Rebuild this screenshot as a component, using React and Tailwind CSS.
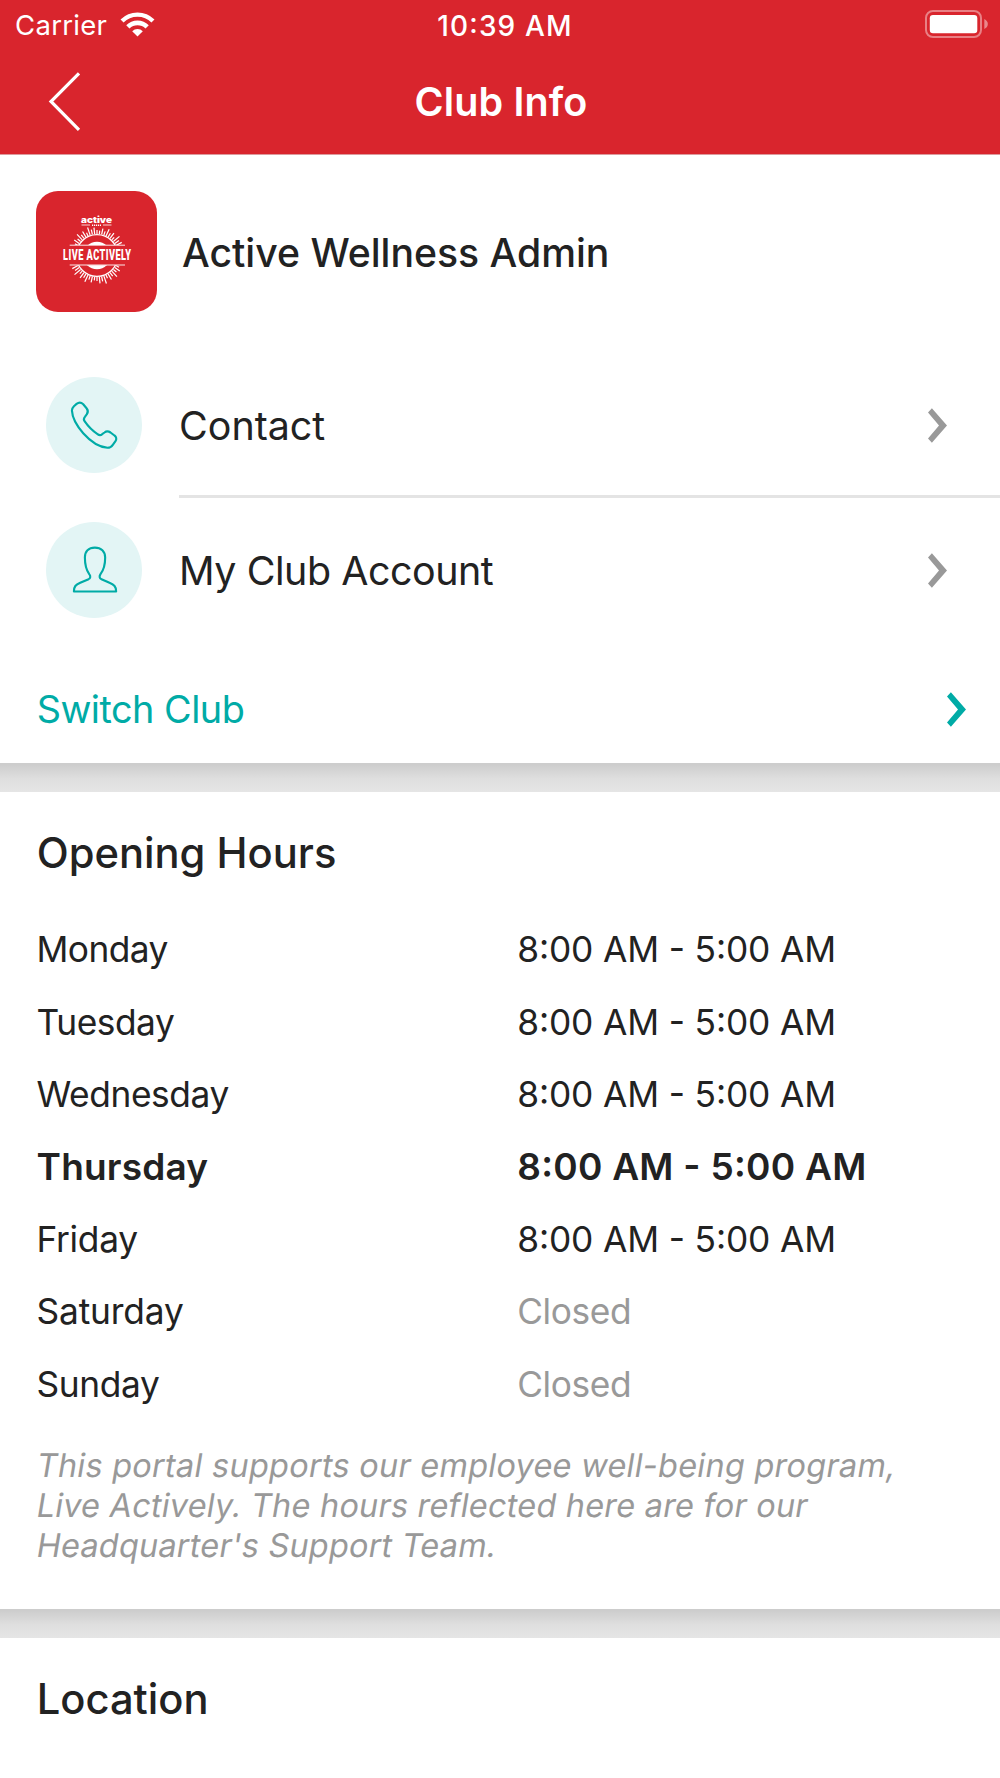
import React from "react";

const HOURS = [
  { day: "Monday", time: "8:00 AM - 5:00 AM", dayClass: "tracking-[-0.55px]" },
  { day: "Tuesday", time: "8:00 AM - 5:00 AM", dayClass: "tracking-[-0.45px]" },
  { day: "Wednesday", time: "8:00 AM - 5:00 AM", dayClass: "tracking-[-0.4px]" },
  { day: "Thursday", time: "8:00 AM - 5:00 AM", today: true, dayClass: "tracking-[0.2px]" },
  { day: "Friday", time: "8:00 AM - 5:00 AM", dayClass: "tracking-[-0.28px]" },
  { day: "Saturday", time: "Closed", closed: true, dayClass: "tracking-[-0.15px]" },
  { day: "Sunday", time: "Closed", closed: true, dayClass: "tracking-[-0.36px]" },
];

const RAY_LENGTHS = [3, 5.5, 3.5, 7, 4, 6, 3, 7.5, 4.5, 6, 3.5];

function buildRays() {
  const rays = [];
  const count = 21;
  for (const side of [-90, 90]) {
    for (let i = 0; i < count; i++) {
      const angle = ((side - 62 + (124 * i) / (count - 1)) * Math.PI) / 180;
      const far = 22 + RAY_LENGTHS[i % RAY_LENGTHS.length];
      rays.push({
        x1: 61 + Math.cos(angle) * 21.5,
        y1: 64.5 + Math.sin(angle) * 21.5,
        x2: 61 + Math.cos(angle) * far,
        y2: 64.5 + Math.sin(angle) * far,
      });
    }
  }
  return rays;
}

function ClubLogo() {
  return (
    <div className="h-[121px] w-[121px] shrink-0 rounded-[22px] bg-[#d9252d]">
      <svg viewBox="0 0 121 121" className="block h-full w-full" fill="none">
        <circle cx="61" cy="64.5" r="20.8" stroke="#fff" strokeWidth="1.3" />
        {buildRays().map((r, i) => (
          <line key={i} {...r} stroke="#fff" strokeWidth="1.2" />
        ))}
        <circle cx="61" cy="64.5" r="13.8" fill="#fff" />
        <rect x="30" y="54" width="62" height="20.2" fill="#d9252d" />
        <path d="M33.7 54.2H89M33.7 74H89" stroke="#fff" strokeWidth="0.9" />
        <text x="45" y="31.8" textLength="31" lengthAdjust="spacingAndGlyphs" fill="#fff" className="font-['Inter'] text-[8.6px] font-black">active</text>
        <path d="M45.5 34H54M67 34H75.5" stroke="#fff" strokeWidth="0.8" />
        <path d="M56 34.2H65" stroke="#fff" strokeWidth="1.6" strokeDasharray="1.2 0.8" />
        <text x="27" y="69.3" textLength="68.5" lengthAdjust="spacingAndGlyphs" fill="#fff" className="font-['Roboto'] text-[14px] font-black tracking-[0.7px]">LIVE ACTIVELY</text>
      </svg>
    </div>
  );
}

function WifiIcon() {
  return (
    <svg width="35" height="25" viewBox="0 0 35 25" className="-mt-px" fill="none">
      <path d="M2.05 9.05A21.85 21.85 0 0 1 32.95 9.05" stroke="#fff" strokeWidth="4.3" />
      <path d="M7.85 14.85A13.65 13.65 0 0 1 27.15 14.85" stroke="#fff" strokeWidth="4.6" />
      <path d="M12.2 19.3A7.4 7.4 0 0 1 22.8 19.3L17.5 24.5Z" fill="#fff" />
    </svg>
  );
}

function BatteryIcon() {
  return (
    <svg width="63" height="28" viewBox="0 0 63 28" className="-mt-[2px]" fill="none">
      <rect x="1" y="1" width="55" height="26" rx="7" stroke="#fff" strokeOpacity="0.42" strokeWidth="2" />
      <rect x="4.8" y="5" width="47.5" height="18.2" rx="3.2" fill="#fff" />
      <path d="M59.3 9C64 11 64 17 59.3 19Z" fill="#fff" fillOpacity="0.45" />
    </svg>
  );
}

function Chevron({ className }) {
  return (
    <svg width="19" height="35" viewBox="0 0 19 35" className={className} fill="currentColor">
      <path d="M3.9 0.3L19 17.5L3.9 34.7L0 30.6L11 17.5L0 4.4Z" />
    </svg>
  );
}

function PhoneIcon() {
  return (
    <svg viewBox="48 51 290 290" className="block h-full w-full" fill="none" stroke="#00aba6" strokeWidth="6.4" strokeLinejoin="round">
      <path d="M126 152C126 147 128 143 132 139L140 132C146 127 154 127 160 133L170 145C175 151 175 157 171 163L165 171C161 176 161 180 164 184C175 200 188 213 203 223C208 227 213 227 217 223L224 218C229 214 236 214 242 218L254 227C260 231 261 238 257 244L249 255C245 261 239 264 233 264C212 262 184 247 160 220C140 197 127 171 126 152Z" />
    </svg>
  );
}

function PersonIcon() {
  return (
    <svg viewBox="48 486 290 290" className="block h-full w-full" fill="none" stroke="#00aba6" strokeWidth="6.4" strokeLinejoin="round">
      <path d="M195 563C176 563 165 575 165 593C165 617 168 629 178 643C183 649 182 655 176 658L151 669C137 675 132 680 132 695H259C259 680 253 675 239 669L215 658C208 655 208 649 212 643C223 629 226 617 226 593C226 575 214 563 195 563Z" />
    </svg>
  );
}

function LinkRow({ icon, label, labelClass, divided }) {
  return (
    <div className="flex h-[145px] pl-[46px]">
      <div className="mt-[24px] h-[96.4px] w-[96.4px] shrink-0 rounded-full bg-[#e3f5f5]">{icon}</div>
      <div
        className={
          "ml-[36.6px] flex flex-1 items-center justify-between pr-[53.5px] border-b-[3px] " +
          (divided ? "border-[#e4e4e4]" : "border-transparent")
        }
      >
        <span className={"mt-[4px] text-[39.4px] leading-[48px] " + labelClass}>{label}</span>
        <Chevron className="mt-[3px] text-[#999]" />
      </div>
    </div>
  );
}

function Band() {
  return <div className="h-[29px] shrink-0 bg-linear-to-b from-[#cdcdcd] from-5% via-[#dfdfdf] via-55% to-[#e5e5e5]" />;
}

function SectionTitle({ children }) {
  return <h2 className="pt-[35px] pl-[36.7px] text-[41.7px] leading-[52px] font-medium">{children}</h2>;
}

export default function App() {
  return (
    <div className="flex h-[1778px] w-[1000px] flex-col overflow-hidden bg-white font-['Inter',sans-serif] text-[#222] [font-feature-settings:'calt']">
      <header className="h-[155px] shrink-0 border-b border-[#dd9a9d] bg-[#d9252d] text-white">
        <div className="grid h-[50px] grid-cols-[1fr_auto_1fr] items-center">
          <div className="flex items-center pl-[15px]">
            <span className="w-[105px] text-[27.5px] leading-[34px] tracking-[0.3px]">Carrier</span>
            <WifiIcon />
          </div>
          <span className="mt-px pl-[10px] text-[28px] leading-[34px] font-medium tracking-[1.15px]">10:39 AM</span>
          <div className="flex justify-end pr-[12px]">
            <BatteryIcon />
          </div>
        </div>
        <div className="grid h-[104px] grid-cols-[1fr_auto_1fr] items-center">
          <svg width="34" height="60" viewBox="0 0 34 60" className="-mt-[2px] ml-[46.5px]" fill="none">
            <path d="M32 2.3L4 30.5L32 58.8" stroke="#fff" strokeWidth="3.2" />
          </svg>
          <h1 className="pl-[2px] text-[39.5px] leading-[48px] font-semibold tracking-[0.12px]">Club Info</h1>
          <span />
        </div>
      </header>

      <section className="h-[608px] shrink-0">
        <div className="flex h-[198px] items-start pt-[36px] pl-[36.3px]">
          <ClubLogo />
          <span className="mt-[37.5px] ml-[24.7px] text-[39.2px] leading-[48px] font-medium tracking-[-0.02px]">Active Wellness Admin</span>
        </div>
        <LinkRow icon={<PhoneIcon />} label="Contact" labelClass="" divided />
        <LinkRow icon={<PersonIcon />} label="My Club Account" labelClass="tracking-[-0.45px]" />
        <div className="flex h-[120px] items-center justify-between pt-[12px] pr-[34px] pl-[36.7px] text-[#00aba6]">
          <span className="text-[37.8px] leading-[46px] tracking-[-0.5px]">Switch Club</span>
          <Chevron />
        </div>
      </section>

      <Band />

      <section className="h-[817px] shrink-0">
        <SectionTitle>Opening Hours</SectionTitle>
        <div className="pt-[34px]">
          {HOURS.map((row) => (
            <div
              key={row.day}
              className={
                "grid h-[72.4px] grid-cols-[480.7px_1fr] items-center pl-[36.5px] " +
                (row.today ? "text-[37px] font-semibold" : "pt-[3px] text-[35.3px]")
              }
            >
              <span className={row.dayClass}>{row.day}</span>
              <span
                className={
                  row.closed
                    ? "tracking-[-0.36px] text-[#999]"
                    : row.today
                      ? "tracking-[0.27px]"
                      : "tracking-[-0.14px]"
                }
              >
                {row.time}
              </span>
            </div>
          ))}
        </div>
        <p className="mt-[26px] pl-[34.7px] text-[32.5px] leading-[40.3px] whitespace-nowrap text-[#999]">
          <span className="block origin-[0_32px] -skew-x-[9.5deg] tracking-[0.24px]">This portal supports our employee well-being program,</span>
          <span className="block origin-[0_32px] -skew-x-[9.5deg] tracking-[0.19px]">Live Actively. The hours reflected here are for our</span>
          <span className="block origin-[0_32px] -skew-x-[9.5deg] tracking-[0.18px]">Headquarter's Support Team.</span>
        </p>
      </section>

      <Band />

      <section className="flex-1">
        <SectionTitle>Location</SectionTitle>
      </section>
    </div>
  );
}
